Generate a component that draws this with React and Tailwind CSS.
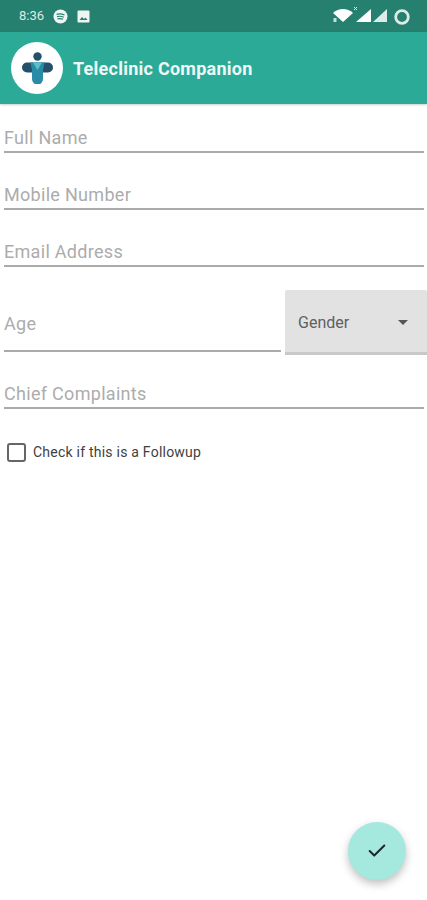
import { Check } from 'lucide-react';

const font = { fontFamily: 'Roboto, sans-serif' };

function Campo({ label, className }) {
  return (
    <div className={`flex h-[30px] items-center border-b-2 border-[#ababab] text-[18px] tracking-[0.3px] text-[#acacac] ${className}`}>
      <span>{label}</span>
    </div>
  );
}

function Logo() {
  return (
    <div className="flex h-[52px] w-[52px] items-center justify-center rounded-full bg-white">
      <svg width="31" height="32" viewBox="0 0 31 32">
        <circle cx="15.500" cy="4.500" r="4.200" fill="#24506b" />
        <rect x="0" y="10.500" width="31" height="10" rx="5" fill="#24506b" />
        <path d="M8.500 10.500h14L21 18v9a5.500 5.500 0 0 1-11 0v-9z" fill="#2a8ba6" />
        <path d="M11 10.500h9L15.500 18z" fill="#5cc0c6" />
      </svg>
    </div>
  );
}

function StatusIcons() {
  return (
    <svg width="78" height="18" viewBox="0 0 78 18">
      <path d="M0 6C5.500 .5 14.500 .5 20 6L10 15z" fill="#fff" />
      <rect x="0.500" y="11" width="3" height="4" fill="#c7dfd9" />
      <path d="M38 2v13H23z" fill="#fff" />
      <path d="M21 0l3 3M24 0l-3 3" stroke="#d7e8e4" strokeWidth="1" />
      <path d="M54 2v13H40z" fill="#fff" fillOpacity="0.85" />
      <circle cx="69" cy="10" r="6.300" fill="none" stroke="#fff" strokeWidth="2.800" strokeOpacity="0.85" />
    </svg>
  );
}

export default function App() {
  return (
    <div className="relative h-[900px] w-[427px] overflow-hidden bg-white" style={font}>
      {/* barra de estado */}
      <div className="flex h-8 items-center justify-between bg-[#26806f] pl-[19px] pr-[16px] text-white">
        <div className="flex items-center">
          <span className="text-[13px] text-[#dcebe7]">8:36</span>
          <svg width="15" height="15" viewBox="0 0 15 15" className="ml-[9px]">
            <circle cx="7.500" cy="7.500" r="7" fill="#eef6f4" />
            <path d="M3.500 5.300c2.700-.7 5.500-.5 8 .7M4 7.600c2.300-.6 4.600-.4 6.800.6M4.500 9.800c2-.4 3.800-.3 5.600.5" stroke="#26806f" strokeWidth="1.200" fill="none" />
          </svg>
          <svg width="13" height="13" viewBox="0 0 13 13" className="ml-[9px]">
            <rect x="0.500" y="0.500" width="12" height="12" rx="1" fill="#eef6f4" />
            <path d="M2.500 10l2.500-3 2 2 1.500-1.500L10.500 10z" fill="#26806f" />
          </svg>
        </div>
        <StatusIcons />
      </div>

      {/* barra superior */}
      <div className="flex h-[72px] items-center bg-[#2bab97] pl-[11px] shadow-[0_1px_2px_rgba(0,0,0,0.2)]">
        <Logo />
        <span className="ml-[10px] text-[18px] font-bold tracking-[0.25px] text-[#eef8f6]">Teleclinic Companion</span>
      </div>

      {/* formulario */}
      <div className="flex flex-col pl-1 pr-[3px] pt-[19px]">
        <Campo label="Full Name" />
        <Campo label="Mobile Number" className="mt-[27px]" />
        <Campo label="Email Address" className="mt-[27px]" />

        <div className="-mr-[3px] mt-[23px] flex items-start">
          <div className="mt-[17px] flex h-[45px] w-[277px] items-center border-b-2 border-[#ababab] pb-[10px] text-[18px] tracking-[0.3px] text-[#acacac]">
            <span>Age</span>
          </div>
          <div className="ml-1 flex h-[65px] flex-1 items-center justify-between rounded-t-[2px] border-b-[3px] border-[#c9c9c9] bg-[#e2e2e2] pt-[3px] pl-[13px] pr-[19px]">
            <span className="text-[16px] text-[#5f5f5f]">Gender</span>
            <span className="h-0 w-0 border-x-[5px] border-t-[5px] border-x-transparent border-t-[#555]" />
          </div>
        </div>

        <Campo label="Chief Complaints" className="mt-[24px]" />

        <div className="mt-[33px] flex items-center pl-[3px]">
          <span className="h-[19px] w-[19px] rounded-[3px] border-2 border-[#666]" />
          <span className="ml-[7px] text-[14px] tracking-[0.23px] text-[#3f3f3f]">Check if this is a Followup</span>
        </div>
      </div>

      {/* boton flotante */}
      <button className="absolute left-[348px] top-[822px] flex h-[58px] w-[58px] items-center justify-center rounded-full bg-[#a4e8de] shadow-[0_4px_8px_rgba(0,0,0,0.25)]">
        <Check size={22} strokeWidth={2.2} color="#1c2733" />
      </button>
    </div>
  );
}
